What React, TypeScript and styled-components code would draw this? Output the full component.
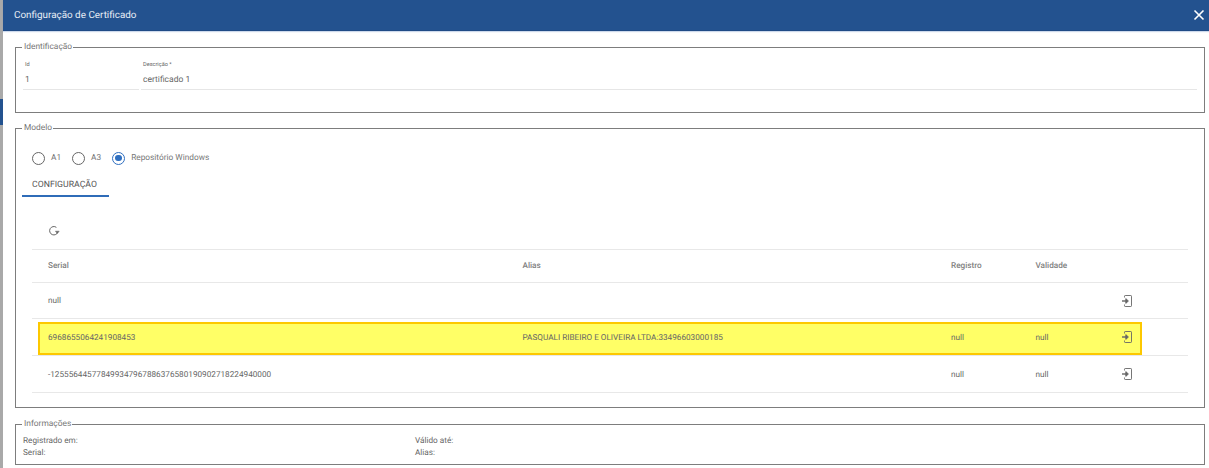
import React from 'react';
import styled, { createGlobalStyle } from 'styled-components';

const GlobalStyle = createGlobalStyle`
  html, body, #root {
    margin: 0;
    padding: 0;
    height: 100%;
    overflow: hidden;
  }
  body {
    font-family: Roboto, "Liberation Sans", sans-serif;
    text-rendering: geometricPrecision;
    color: #666;
    background: #fff;
  }
`;

const Page = styled.div`
  display: flex;
  width: 1209px;
  height: 468px;
  background: #fff;
`;

const Backdrop = styled.div`
  width: 3px;
  flex: none;
  background: #a9a9a9;
  padding-top: 99px;
  box-sizing: border-box;
`;

const BackdropBlock = styled.div`
  height: 26px;
  background: #23528f;
`;

const Dialog = styled.div`
  flex: 1;
  display: flex;
  flex-direction: column;
  min-width: 0;
`;

const Header = styled.header`
  display: flex;
  align-items: center;
  justify-content: space-between;
  height: 31px;
  flex: none;
  box-sizing: border-box;
  padding: 0 3px 0 11px;
  background: #23528f;
  border-bottom: 1px solid #1f4a86;
  box-shadow: 0 1px 1px rgba(90, 130, 190, 0.3);
`;

const Title = styled.h1`
  margin: 0;
  font-size: 9.9px;
  font-weight: 400;
  color: #e8eef6;
`;

const CloseButton = styled.button`
  display: flex;
  padding: 0;
  border: none;
  background: none;
  color: #fff;
`;

const Body = styled.div`
  flex: 1;
  display: flex;
  flex-direction: column;
  padding: 11px 4px 0 12px;
`;

const Group = styled.fieldset<{ $height: number; $gap: number }>`
  margin: 0 0 ${p => p.$gap}px;
  padding: 0;
  height: ${p => p.$height}px;
  box-sizing: border-box;
  border: 1px solid #7d7d7d;
  min-width: 0;
  position: relative;
`;

const GroupLegend = styled.legend`
  margin-left: 6px;
  padding: 0 1px 0 2px;
  font-size: 8.4px;
  line-height: 10px;
  color: #777;
`;

const FieldRow = styled.div`
  display: flex;
  gap: 2px;
  padding: 10px 7px 0 7px;
`;

const Field = styled.div<{ $width?: number }>`
  ${p => (p.$width ? `width: ${p.$width}px; flex: none;` : 'flex: 1;')}
  height: 28px;
  box-sizing: border-box;
  border-bottom: 1px solid #e6e6e6;
  padding-left: 2px;
`;

const FieldLabel = styled.div`
  font-size: 5.6px;
  line-height: 7px;
  color: #666;
`;

const FieldValue = styled.div`
  margin-top: 5.5px;
  font-size: 8.5px;
  line-height: 11px;
  color: #666;
`;

const RadioRow = styled.div`
  display: flex;
  align-items: center;
  height: 14px;
  margin: 18px 0 0 16px;
`;

const RadioOption = styled.label`
  display: flex;
  align-items: center;
  gap: 6px;
  margin-right: 11px;
  font-size: 8.3px;
  color: #777;
`;

const RadioCircle = styled.span<{ $checked?: boolean }>`
  position: relative;
  display: block;
  width: 13px;
  height: 13px;
  box-sizing: border-box;
  border-radius: 50%;
  border: 1.2px solid ${p => (p.$checked ? '#2f6fc0' : '#666')};

  &::after {
    content: '';
    display: ${p => (p.$checked ? 'block' : 'none')};
    position: absolute;
    inset: 2.2px;
    border-radius: 50%;
    background: #2f6fc0;
  }
`;

const Tabs = styled.div`
  display: flex;
  margin: 12px 0 0 6px;
`;

const Tab = styled.div`
  width: 87px;
  height: 20px;
  box-sizing: border-box;
  text-align: center;
  font-size: 8.7px;
  line-height: 17px;
  padding-right: 2px;
  font-weight: 400;
  color: #555;
  border-bottom: 2px solid #2f6cb8;
`;

const TablePanel = styled.div`
  margin: 0 16px 0 16px;
`;

const Toolbar = styled.div`
  display: flex;
  align-items: center;
  height: 52px;
  padding: 16px 0 0 16px;
  box-sizing: border-box;
  color: #666;
`;

const Row = styled.div<{ $height: number; $head?: boolean }>`
  position: relative;
  display: grid;
  grid-template-columns: 474.5px 428.5px 84.5px 72px 1fr;
  align-items: center;
  height: ${p => p.$height}px;
  box-sizing: border-box;
  padding: ${p => (p.$head ? 0 : 2)}px 0 0 16px;
  border-top: 1px solid #e8e8e8;
  font-size: 8.2px;
  font-weight: ${p => (p.$head ? 500 : 400)};
  color: ${p => (p.$head ? '#808080' : '#666')};
`;

const LastLine = styled.div`
  height: 1px;
  background: #e8e8e8;
`;

const Highlight = styled.div`
  position: absolute;
  left: 6px;
  top: 3px;
  width: 1104px;
  height: 33px;
  box-sizing: border-box;
  background: #ffff66;
  border: 2px solid #fdc800;
`;

const Cell = styled.div`
  position: relative;
  white-space: nowrap;
  line-height: 11px;
`;

const ActionCell = styled(Cell)`
  display: flex;
  margin-top: -2px;
  padding-left: 14px;
  color: #666;
`;

const InfoGrid = styled.div`
  display: grid;
  grid-template-columns: 392px 1fr;
  padding: 7px 0 0 7px;
  font-size: 8.2px;
  line-height: 11.5px;
  color: #666;
`;

const ExitIcon = () => (
  <svg width="10" height="12" viewBox="0 0 10 12" fill="none" stroke="currentColor" strokeWidth="0.9">
    <path d="M2.5 2.5V1.2q0-.7.7-.7h5.6q.7 0 .7.7v9.6q0 .7-.7.7H3.2q-.7 0-.7-.7V9.5" />
    <path d="M0 6h4.5" strokeWidth="1.4" />
    <path d="M3.8 3.6L6.4 6 3.8 8.4z" fill="currentColor" />
  </svg>
);

const RefreshIcon = () => (
  <svg width="12" height="12" viewBox="0 0 12 12" fill="none" stroke="currentColor" strokeWidth="1">
    <path d="M9.9 6.8A4.2 4.2 0 1 1 8.4 2.4" />
    <path d="M7.4 6.2h3.8L9.3 8.6z" fill="currentColor" strokeWidth="0.5" />
  </svg>
);

const rows = [
  { serial: 'null', alias: '', registro: '', validade: '', height: 36 },
  {
    serial: '6968655064241908453',
    alias: 'PASQUALI RIBEIRO E OLIVEIRA LTDA:33496603000185',
    registro: 'null',
    validade: 'null',
    height: 37,
    selected: true,
  },
  {
    serial: '-125556445778499347967886376580190902718224940000',
    alias: '',
    registro: 'null',
    validade: 'null',
    height: 37,
  },
];

export default function App() {
  return (
    <Page>
      <GlobalStyle />
      <Backdrop>
        <BackdropBlock />
      </Backdrop>
      <Dialog>
        <Header>
          <Title>Configuração de Certificado</Title>
          <CloseButton aria-label="Fechar">
            <svg width="14" height="14" viewBox="0 0 14 14" stroke="currentColor" strokeWidth="1.6">
              <path d="M2.5 2.5l9 9M11.5 2.5l-9 9" />
            </svg>
          </CloseButton>
        </Header>
        <Body>
          <Group $height={71} $gap={10}>
            <GroupLegend>Identificação</GroupLegend>
            <FieldRow>
              <Field $width={116}>
                <FieldLabel>Id</FieldLabel>
                <FieldValue>1</FieldValue>
              </Field>
              <Field>
                <FieldLabel>Descrição *</FieldLabel>
                <FieldValue>certificado 1</FieldValue>
              </Field>
            </FieldRow>
          </Group>
          <Group $height={285} $gap={11}>
            <GroupLegend>Modelo</GroupLegend>
            <RadioRow>
              <RadioOption>
                <RadioCircle />
                A1
              </RadioOption>
              <RadioOption>
                <RadioCircle />
                A3
              </RadioOption>
              <RadioOption>
                <RadioCircle $checked />
                Repositório Windows
              </RadioOption>
            </RadioRow>
            <Tabs>
              <Tab>CONFIGURAÇÃO</Tab>
            </Tabs>
            <TablePanel>
              <Toolbar>
                <RefreshIcon />
              </Toolbar>
              <Row $height={33} $head>
                <Cell>Serial</Cell>
                <Cell>Alias</Cell>
                <Cell>Registro</Cell>
                <Cell>Validade</Cell>
                <Cell />
              </Row>
              {rows.map(row => (
                <Row key={row.serial} $height={row.height}>
                  {row.selected && <Highlight />}
                  <Cell>{row.serial}</Cell>
                  <Cell>{row.alias}</Cell>
                  <Cell>{row.registro}</Cell>
                  <Cell>{row.validade}</Cell>
                  <ActionCell>
                    <ExitIcon />
                  </ActionCell>
                </Row>
              ))}
              <LastLine />
            </TablePanel>
          </Group>
          <Group $height={46} $gap={0}>
            <GroupLegend>Informações</GroupLegend>
            <InfoGrid>
              <div>Registrado em:</div>
              <div>Válido até:</div>
              <div>Serial:</div>
              <div>Alias:</div>
            </InfoGrid>
          </Group>
        </Body>
      </Dialog>
    </Page>
  );
}
